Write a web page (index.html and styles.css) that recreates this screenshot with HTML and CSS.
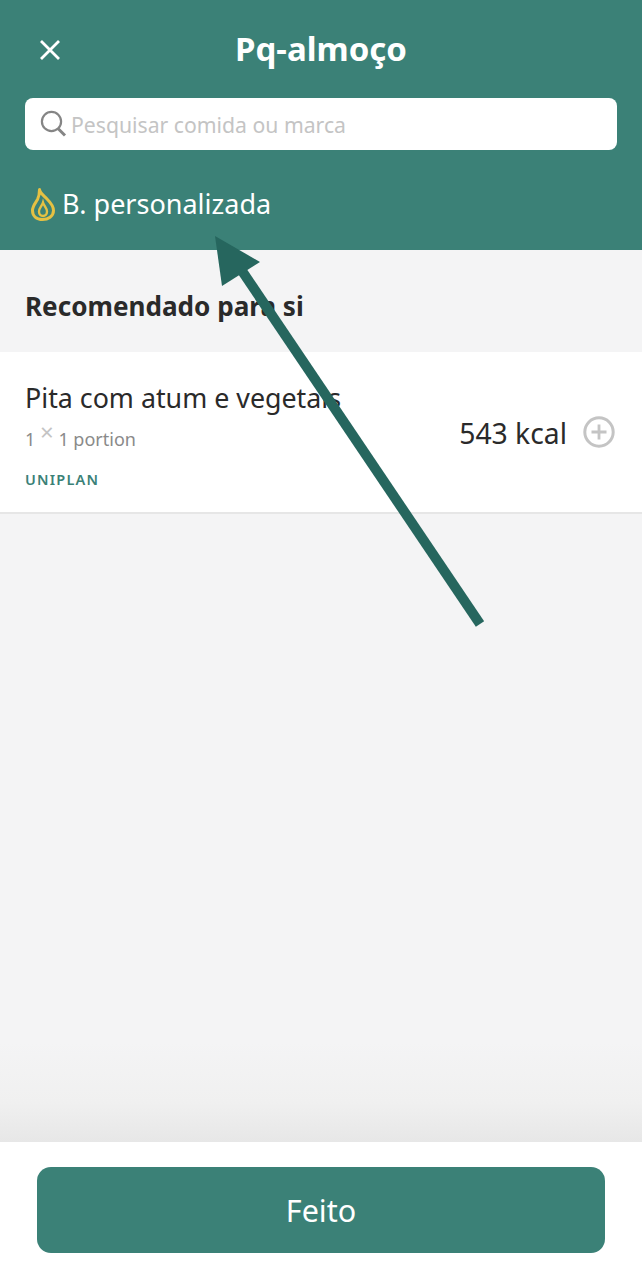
FILE: index.html
```html
<!DOCTYPE html>
<html lang="pt">
<head>
<meta charset="utf-8">
<title>Pq-almoço</title>
<link rel="stylesheet" href="styles.css">
</head>
<body>
<div class="screen">
  <header class="top">
    <div class="titlebar">
      <svg class="close" width="22" height="22" viewBox="0 0 22 22"><path d="M2 2L20 20M20 2L2 20" stroke="#fff" stroke-width="2.8" fill="none"/></svg>
      <h1>Pq-almoço</h1>
    </div>
    <div class="search">
      <svg width="28" height="28" viewBox="0 0 28 28"><circle cx="12.5" cy="11.5" r="9.6" stroke="#858585" stroke-width="2.2" fill="none"/><path d="M19 18.500L26 25.500" stroke="#858585" stroke-width="3" fill="none"/></svg>
      <span>Pesquisar comida ou marca</span>
    </div>
    <div class="budget">
      <svg width="26" height="34" viewBox="0 0 26 34"><path d="M10.500 2.500C11 6 14 8 18 12C22 16 24.500 19 24.500 23.500C24.500 29.500 19 32.500 13.500 32.500C7.500 32.500 3.500 29 3.500 23.500C3.500 19 6.500 16 8.500 12.500C10 9.500 10.500 6 10.500 2.500Z" stroke="#e5c143" stroke-width="3" fill="none" stroke-linejoin="round"/><path d="M14 15.500C15 19 18 21 18 24.500C18 27.500 16 29 14 29C12 29 10 27.500 10 24.500C10 21 13 19 14 15.500Z" stroke="#e5c143" stroke-width="2.4" fill="none"/></svg>
      <span>B. personalizada</span>
    </div>
  </header>

  <main class="content">
    <h2>Recomendado para si</h2>
    <div class="item">
      <div class="item-info">
        <div class="item-name">Pita com atum e vegetais</div>
        <div class="item-qty">1 <span class="times">×</span> 1 portion</div>
        <div class="item-brand">UNIPLAN</div>
      </div>
      <div class="item-kcal">543 kcal</div>
      <svg class="add" width="32" height="32" viewBox="0 0 32 32"><circle cx="16" cy="16" r="14.2" stroke="#c4c4c4" stroke-width="3" fill="none"/><path d="M16 8.500V23.500M8.500 16H23.500" stroke="#c4c4c4" stroke-width="2.8" fill="none"/></svg>
    </div>
  </main>

  <footer class="bottom">
    <div class="done">Feito</div>
  </footer>

  <svg class="arrow" width="642" height="1280" viewBox="0 0 642 1280">
    <path d="M480 624L236 262" stroke="#26665e" stroke-width="10" fill="none"/>
    <path d="M215 236L260 262L222 286Z" fill="#26665e"/>
  </svg>
</div>
</body>
</html>
```

FILE: styles.css
```css
html, body {
  margin: 0;
  padding: 0;
}
body {
  font-family: "Noto Sans", "Liberation Sans", sans-serif;
  background-color: #f4f4f5;
  color: #2a2a2a;
}
.screen {
  position: relative;
  width: 642px;
  height: 1280px;
  overflow: hidden;
  display: flex;
  flex-direction: column;
}

/* header */
.top {
  height: 250px;
  box-sizing: border-box;
  padding: 0 25px;
  background-color: #3b8177;
  color: #fff;
}
.titlebar {
  position: relative;
  height: 98px;
  display: flex;
  align-items: center;
  justify-content: center;
  padding-bottom: 2px;
  box-sizing: border-box;
}
.titlebar h1 {
  margin: 0;
  font-size: 33px;
  font-weight: 700;
}
.close {
  position: absolute;
  left: 14px;
  top: 39px;
}
.search {
  height: 52px;
  display: flex;
  align-items: center;
  gap: 4px;
  padding-left: 14px;
  background-color: #fff;
  border-radius: 8px;
  color: #c4c4c4;
  font-size: 21.2px;
}
.budget {
  display: flex;
  align-items: center;
  gap: 7px;
  margin-top: 37px;
  padding-left: 4px;
  font-size: 27px;
  line-height: 34px;
}

/* list */
.content {
  flex: 1;
  background: linear-gradient(to bottom, #f4f4f5 calc(100% - 100px), #f0f0f0 calc(100% - 40px), #e7e7e7);
}
.content h2 {
  margin: 0;
  height: 102px;
  box-sizing: border-box;
  padding: 38px 25px 0;
  font-size: 26.1px;
  line-height: 36px;
  font-weight: 700;
}
.item {
  height: 162px;
  box-sizing: border-box;
  display: flex;
  align-items: center;
  padding: 0 27px 0 25px;
  background-color: #fff;
  border-bottom: 2px solid #e6e6e6;
}
.item-info {
  flex: 1;
  align-self: flex-start;
  padding-top: 28px;
}
.item-name {
  font-size: 26.8px;
  line-height: 36px;
}
.item-qty {
  margin-top: 10px;
  font-size: 18px;
  line-height: 26px;
  color: #8a8a8a;
}
.times {
  position: relative;
  top: -5px;
  color: #c4c4c4;
  font-size: 24px;
  line-height: 20px;
}
.item-brand {
  margin-top: 17px;
  font-size: 14.5px;
  line-height: 20px;
  font-weight: 600;
  letter-spacing: 1.2px;
  color: #3b8177;
}
.item-kcal {
  font-size: 28.3px;
  margin-right: 16px;
  padding-top: 1px;
}

/* footer */
.bottom {
  height: 138px;
  box-sizing: border-box;
  padding: 25px 37px 0;
  background-color: #fff;
}
.done {
  height: 86px;
  display: flex;
  align-items: center;
  justify-content: center;
  background-color: #3b8177;
  border-radius: 14px;
  color: #fff;
  font-size: 30.5px;
}

/* annotation drawn over the screenshot */
.arrow {
  position: absolute;
  left: 0;
  top: 0;
  pointer-events: none;
}
```
